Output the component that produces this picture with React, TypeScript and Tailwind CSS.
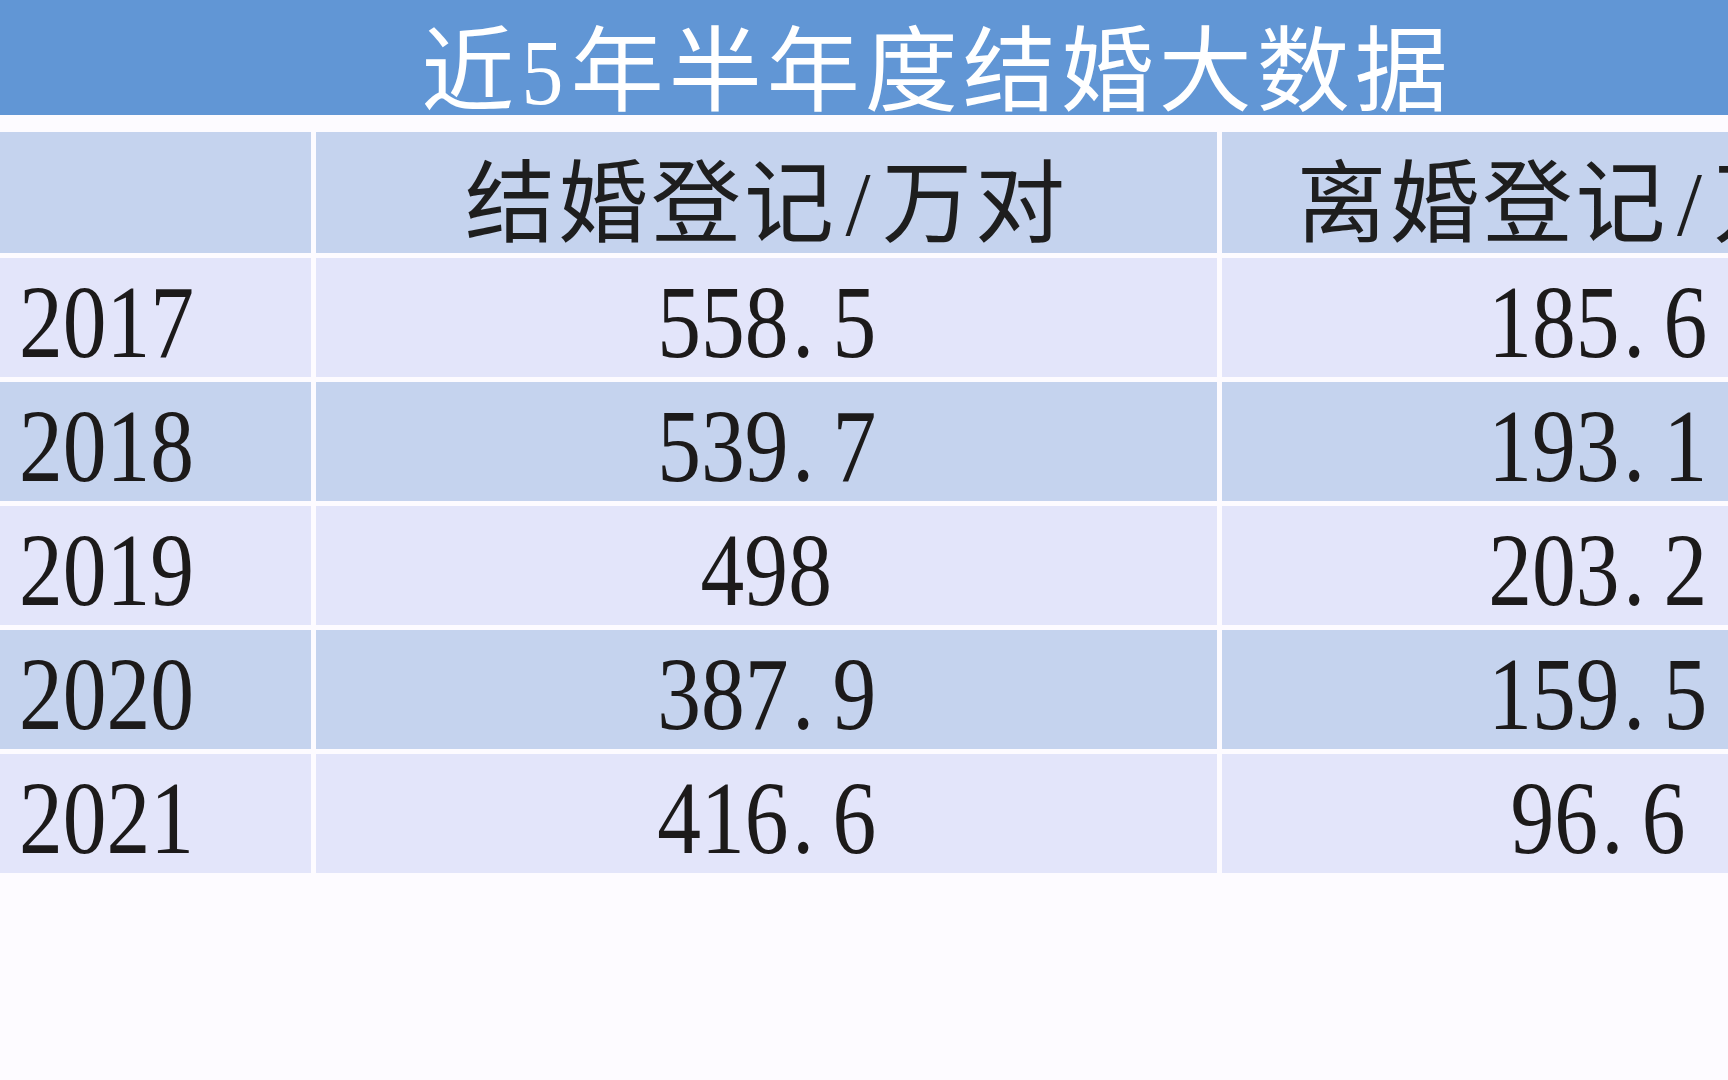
import React from "react";

const rows: { year: string; marry: string; divorce: string }[] = [
  { year: "2017", marry: "558.5", divorce: "185.6" },
  { year: "2018", marry: "539.7", divorce: "193.1" },
  { year: "2019", marry: "498", divorce: "203.2" },
  { year: "2020", marry: "387.9", divorce: "159.5" },
  { year: "2021", marry: "416.6", divorce: "96.6" },
];

function Num({ v, left }: { v: string; left?: boolean }) {
  const parts = v.split(".");
  return (
    <span
      className={`inline-block scale-x-[0.85] whitespace-nowrap ${left ? "origin-left" : "origin-center"}`}
    >
      {parts[0]}
      {parts.length > 1 && (
        <>
          <span className="inline-block w-[0.5em] pl-[0.04em] text-left">.</span>
          {parts[1]}
        </>
      )}
    </span>
  );
}

const numFont = "font-['Liberation_Serif','Noto_Sans_CJK_SC',serif]";
const cjkFont = "font-['Liberation_Serif','Noto_Sans_CJK_SC',sans-serif]";

export default function App() {
  return (
    <div className="h-[1080px] w-[1728px] overflow-hidden bg-[#fdfbff]">
      <div className="w-[1980px]">
        {/* Title band */}
        <div className="flex h-[115px] bg-[#6196d5]">
          <div
            className={`flex w-[1874px] items-center justify-center pt-[30px] text-[93px] leading-none tracking-[5px] text-white ${cjkFont}`}
          >
            近<span className="inline-block scale-x-[0.9] font-['Liberation_Serif',serif]">5</span>年半年度结婚大数据
          </div>
        </div>

        {/* Table */}
        <div className="mt-[17px] grid grid-cols-[311px_901px_752px] gap-x-[5px] gap-y-[5px]">
          {/* header */}
          <div className="h-[121px] bg-[#c5d3ee]" />
          <div
            className={`flex h-[121px] items-center justify-center bg-[#c5d3ee] pt-[24px] text-[90px] leading-none tracking-[3px] text-[#1e1e1e] ${cjkFont}`}
          >
            结婚登记<span className="inline-block w-[0.5em] text-center">/</span>万对
          </div>
          <div
            className={`flex h-[121px] items-center justify-center bg-[#c5d3ee] pt-[24px] text-[90px] leading-none tracking-[3px] text-[#1e1e1e] ${cjkFont}`}
          >
            离婚登记<span className="inline-block w-[0.5em] text-center">/</span>万对
          </div>

          {rows.map((r, i) => {
            const bg = i % 2 === 0 ? "bg-[#e3e5fa]" : "bg-[#c5d3ee]";
            return (
              <React.Fragment key={r.year}>
                <div
                  className={`flex h-[119px] items-center pl-[19px] pt-[10px] text-[103px] leading-none text-[#1c1a1a] ${numFont} ${bg}`}
                >
                  <Num v={r.year} left />
                </div>
                <div
                  className={`flex h-[119px] items-center justify-center pt-[10px] text-[103px] leading-none text-[#1c1a1a] ${numFont} ${bg}`}
                >
                  <Num v={r.marry} />
                </div>
                <div
                  className={`flex h-[119px] items-center justify-center pt-[10px] text-[103px] leading-none text-[#1c1a1a] ${numFont} ${bg}`}
                >
                  <Num v={r.divorce} />
                </div>
              </React.Fragment>
            );
          })}
        </div>
      </div>
    </div>
  );
}
